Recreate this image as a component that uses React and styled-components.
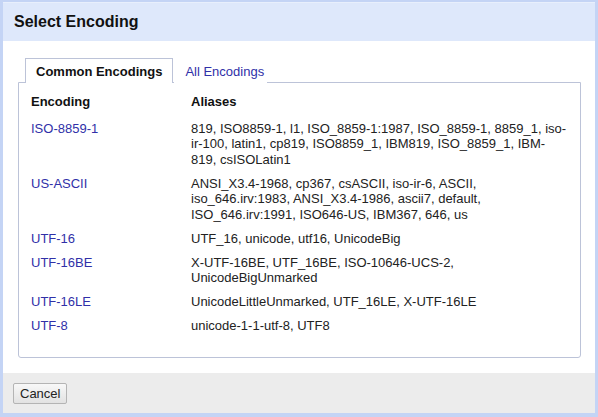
import React from 'react';
import styled, { createGlobalStyle } from 'styled-components';

const GlobalStyle = createGlobalStyle`
  html, body {
    margin: 0;
    padding: 0;
    background: #ffffff;
  }
  body {
    font-family: Arial, "Liberation Sans", sans-serif;
    font-size: 13px;
    color: #222222;
  }
`;

const ENCODINGS = [
  {
    name: 'ISO-8859-1',
    aliases: '819, ISO8859-1, l1, ISO_8859-1:1987, ISO_8859-1, 8859_1, iso-ir-100, latin1, cp819, ISO8859_1, IBM819, ISO_8859_1, IBM-819, csISOLatin1',
  },
  {
    name: 'US-ASCII',
    aliases: 'ANSI_X3.4-1968, cp367, csASCII, iso-ir-6, ASCII, iso_646.irv:1983, ANSI_X3.4-1986, ascii7, default, ISO_646.irv:1991, ISO646-US, IBM367, 646, us',
  },
  { name: 'UTF-16', aliases: 'UTF_16, unicode, utf16, UnicodeBig' },
  { name: 'UTF-16BE', aliases: 'X-UTF-16BE, UTF_16BE, ISO-10646-UCS-2, UnicodeBigUnmarked' },
  { name: 'UTF-16LE', aliases: 'UnicodeLittleUnmarked, UTF_16LE, X-UTF-16LE' },
  { name: 'UTF-8', aliases: 'unicode-1-1-utf-8, UTF8' },
];

const Dialog = styled.div`
  width: 598px;
  height: 417px;
  box-sizing: border-box;
  border: 3px solid #c4d4f5;
  border-top-width: 2px;
  border-bottom-width: 4px;
  display: flex;
  flex-direction: column;
  background: #ffffff;
`;

const Header = styled.div`
  height: 38px;
  background: #dee8fb;
  border-top: 1px solid #e8effc;
  display: flex;
  align-items: center;
  padding-left: 11px;

  h1 {
    margin: 0;
    font-size: 16px;
    font-weight: bold;
    color: #111111;
  }
`;

const Body = styled.div`
  flex: 1;
  padding: 16px 14px 15px 15px;
  display: flex;
  flex-direction: column;
`;

const TabBar = styled.div`
  display: flex;
  align-items: flex-end;
  padding-left: 7px;
  height: 25px;
`;

const Tab = styled.div`
  height: 25px;
  box-sizing: border-box;
  padding: 0 10px;
  display: flex;
  align-items: center;
  font-size: 13px;
  cursor: pointer;
  color: ${({ active }) => (active ? '#111111' : '#3030a8')};
  font-weight: ${({ active }) => (active ? 'bold' : 'normal')};
  background: #ffffff;
  border: 1px solid ${({ active }) => (active ? '#bcc3d8' : 'transparent')};
  border-bottom: none;
  margin-bottom: -1px;
  position: relative;
  z-index: 1;
  padding-right: ${({ active }) => (active ? '10px' : '2px')};
  margin-right: 1px;
`;

const Panel = styled.div`
  flex: 1;
  border: 1px solid #bcc3d8;
  border-radius: 0 0 3px 3px;
  padding: 11px 12px 0 12px;
`;

const Row = styled.div`
  display: grid;
  grid-template-columns: 160px 378px;
  line-height: 15.5px;
  padding: ${({ head }) => (head ? '0 0 7px' : '4px 0 4.5px')};
  font-weight: ${({ head }) => (head ? 'bold' : 'normal')};
  color: ${({ head }) => (head ? '#111111' : '#222222')};
`;

const EncLink = styled.a`
  color: #3030a8;
  text-decoration: none;
  cursor: pointer;
`;

const Footer = styled.div`
  height: 40px;
  background: #ececec;
  display: flex;
  align-items: center;
  padding-left: 10px;
`;

const Button = styled.button`
  font-family: Arial, "Liberation Sans", sans-serif;
  font-size: 13px;
  color: #222222;
  height: 21px;
  padding: 0 6px;
  border: 1px solid #b4b4b4;
  border-radius: 2px;
  background: linear-gradient(#f8f8f8, #e2e2e2);
  margin-top: 1px;
`;

export default function App() {
  return (
    <>
      <GlobalStyle />
      <Dialog>
        <Header>
          <h1>Select Encoding</h1>
        </Header>
        <Body>
          <TabBar>
            <Tab active>Common Encodings</Tab>
            <Tab>All Encodings</Tab>
          </TabBar>
          <Panel>
            <Row head>
              <div>Encoding</div>
              <div>Aliases</div>
            </Row>
            {ENCODINGS.map((e) => (
              <Row key={e.name}>
                <div><EncLink>{e.name}</EncLink></div>
                <div>{e.aliases}</div>
              </Row>
            ))}
          </Panel>
        </Body>
        <Footer>
          <Button>Cancel</Button>
        </Footer>
      </Dialog>
    </>
  );
}
